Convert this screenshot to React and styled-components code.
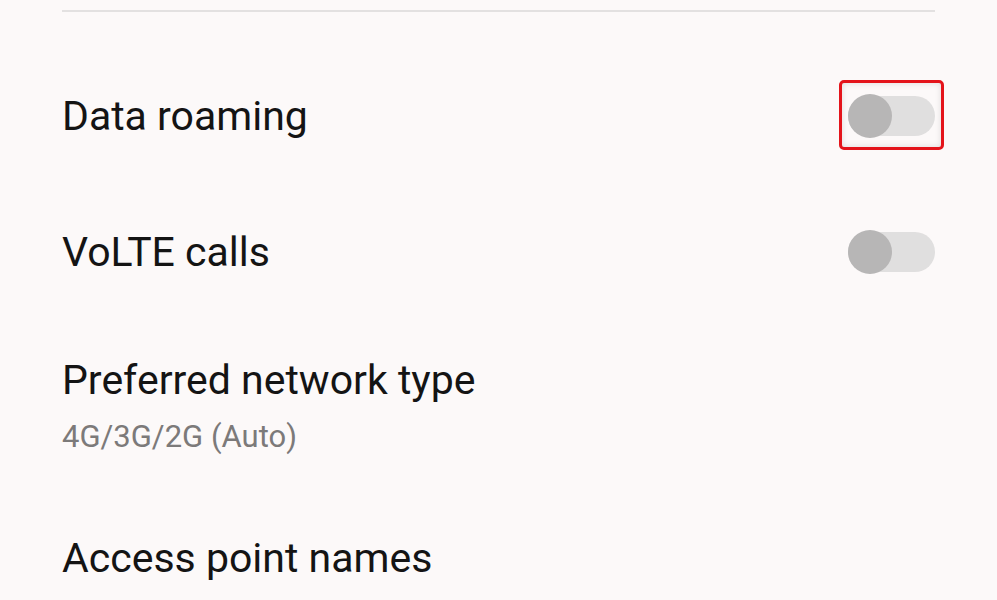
import styled, { createGlobalStyle } from "styled-components";

const GlobalStyle = createGlobalStyle`
  html, body {
    margin: 0;
    padding: 0;
    background: #fcf9f9;
  }
  body {
    font-family: Roboto, "Noto Sans", sans-serif;
  }
`;

const settings = [
  { title: "Data roaming", toggle: true, highlighted: true },
  { title: "VoLTE calls", toggle: true },
  { title: "Preferred network type", subtitle: "4G/3G/2G (Auto)" },
  { title: "Access point names" },
];

const Page = styled.div`
  width: 997px;
  height: 600px;
  overflow: hidden;
  box-sizing: border-box;
  padding: 10px 62px 0 62px;
  background: #fcf9f9;
`;

const Divider = styled.div`
  height: 2px;
  background: #e3e1e1;
  margin-bottom: 36px;
`;

const Row = styled.div`
  display: flex;
  align-items: center;
  justify-content: space-between;
  height: ${(props) => (props.tall ? "170px" : "136px")};
`;

const Texts = styled.div`
  display: flex;
  flex-direction: column;
  gap: 15px;
`;

const Title = styled.div`
  font-size: 41px;
  line-height: 48px;
  color: #141414;
`;

const Subtitle = styled.div`
  font-size: 31px;
  line-height: 36px;
  color: #7c7a7a;
`;

const SwitchWrap = styled.div`
  position: relative;
  width: 87px;
  height: 44px;
  display: flex;
  align-items: center;

  ${(props) =>
    props.highlighted &&
    `
    &::after {
      content: "";
      position: absolute;
      left: -9px;
      right: -9px;
      top: -14px;
      bottom: -12px;
      border: 3px solid #e4141b;
      border-radius: 5px;
      box-shadow: inset 0 0 6px rgba(0, 0, 0, 0.12);
    }
  `}
`;

const Track = styled.div`
  width: 87px;
  height: 40px;
  border-radius: 20px;
  background: #e0dfdf;
`;

const Thumb = styled.div`
  position: absolute;
  left: 0;
  top: 0;
  width: 44px;
  height: 44px;
  border-radius: 50%;
  background: #b7b6b6;
`;

const Switch = ({ highlighted }) => (
  <SwitchWrap highlighted={highlighted}>
    <Track />
    <Thumb />
  </SwitchWrap>
);

export default function App() {
  return (
    <>
      <GlobalStyle />
      <Page>
        <Divider />
        {settings.map((item) => (
          <Row key={item.title} tall={!!item.subtitle}>
            <Texts>
              <Title>{item.title}</Title>
              {item.subtitle && <Subtitle>{item.subtitle}</Subtitle>}
            </Texts>
            {item.toggle && <Switch highlighted={item.highlighted} />}
          </Row>
        ))}
      </Page>
    </>
  );
}
